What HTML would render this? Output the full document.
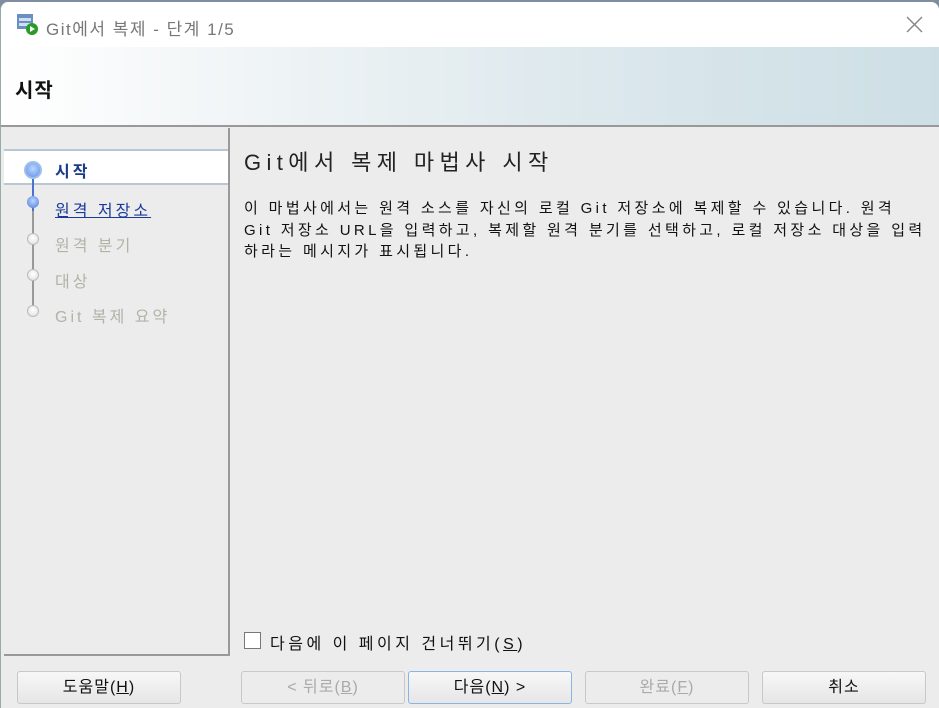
<!DOCTYPE html>
<html><head><meta charset="utf-8"><style>
*{margin:0;padding:0;box-sizing:border-box}
body{width:939px;height:708px;overflow:hidden;background:#7f8fa0;font-family:"Liberation Sans","Noto Sans CJK KR",sans-serif;position:relative}
.win{position:absolute;left:0;top:2px;width:939px;height:706px;background:#ececec;border-radius:8px 8px 0 0;overflow:hidden;border-left:1px solid #9aa}
.title{position:absolute;left:0;top:0;width:100%;height:45px;background:#fff}
.title span{position:absolute;left:45px;top:13px;font-size:17px;color:#777;letter-spacing:1.5px}
.hdr{position:absolute;left:0;top:45px;width:100%;height:80px;background:linear-gradient(90deg,#fff 0%,#eef3f5 30%,#d9e6eb 70%,#cddfe5 100%);border-bottom:2px solid #999}
.hdr span{position:absolute;left:14px;top:27px;font-size:20px;font-weight:bold;color:#111;letter-spacing:1px}
.left{position:absolute;left:3px;top:126px;width:226px;height:528px;border-right:2px solid #999;border-bottom:2px solid #999}
.sel{position:absolute;left:0;top:21px;width:224px;height:36px;background:#fff;border-top:2px solid #b8c6d6;border-bottom:2px solid #b8c6d6}
.it{position:absolute;left:51px;font-size:16px;letter-spacing:3px}
.dot{position:absolute;width:12px;height:12px;border-radius:50%}
.btn{position:absolute;top:669px;height:33px;width:164px;border:1px solid #c8c8c8;border-radius:3px;background:linear-gradient(#f7f7f7,#e6e6e6);font-size:16px;text-align:center;line-height:31px;color:#111;letter-spacing:1px}
.dis{color:#aaa;background:#ececec}
</style></head><body>
<div class="win">
<div class="title">
<svg style="position:absolute;left:16px;top:12px" width="22" height="22"><rect x="0" y="0" width="16" height="15" fill="#6a8fc0"/><rect x="2" y="4" width="12" height="3" fill="#cfe0f4"/><rect x="2" y="9" width="12" height="3" fill="#cfe0f4"/><circle cx="15" cy="15" r="6" fill="#2a9a2a"/><path d="M13 12 L18 15 L13 18Z" fill="#fff"/></svg>
<span>Git에서 복제 - 단계 1/5</span>
<svg style="position:absolute;left:905px;top:14px" width="17" height="17"><path d="M1 1L16 16M16 1L1 16" stroke="#888" stroke-width="1.5"/></svg>
</div>
<div class="hdr"><span>시작</span></div>
<div class="left">
<div class="sel"></div>
<div style="position:absolute;left:28px;top:38px;width:2px;height:45px;background:#4a72d0"></div>
<div style="position:absolute;left:28px;top:83px;width:2px;height:100px;background:#999"></div>
<div class="dot" style="left:20px;top:33px;width:18px;height:18px;left:20px;background:radial-gradient(circle at 50% 40%,#bcd6ff,#5f8ee6);border:2px solid #9ec0ee"></div>
<div class="dot" style="left:23px;top:68px;background:radial-gradient(circle at 50% 40%,#bcd6ff,#4a7ad8)"></div>
<div class="dot" style="left:23px;top:105px;background:radial-gradient(circle at 50% 40%,#fff,#ddd);border:1px solid #bbb"></div>
<div class="dot" style="left:23px;top:141px;background:radial-gradient(circle at 50% 40%,#fff,#ddd);border:1px solid #bbb"></div>
<div class="dot" style="left:23px;top:177px;background:radial-gradient(circle at 50% 40%,#fff,#ddd);border:1px solid #bbb"></div>
<div class="it" style="top:30px;font-weight:bold;color:#1a3a8a">시작</div>
<div class="it" style="top:69px;color:#1a3a9a;text-decoration:underline">원격 저장소</div>
<div class="it" style="top:104px;color:#b0b4a8">원격 분기</div>
<div class="it" style="top:140px;color:#b0b4a8">대상</div>
<div class="it" style="top:175px;color:#b0b4a8">Git 복제 요약</div>
</div>
<div style="position:absolute;left:243px;top:143px;font-size:22px;color:#222;letter-spacing:5.4px">Git에서 복제 마법사 시작</div>
<div style="position:absolute;left:243px;top:196px;width:690px;font-size:15px;line-height:21.5px;color:#111;letter-spacing:3.35px;white-space:nowrap">이 마법사에서는 원격 소스를 자신의 로컬 Git 저장소에 복제할 수 있습니다. 원격<br>Git 저장소 URL을 입력하고, 복제할 원격 분기를 선택하고, 로컬 저장소 대상을 입력<br>하라는 메시지가 표시됩니다.</div>
<div style="position:absolute;left:243px;top:630px;width:17px;height:17px;border:1px solid #777;background:#fff"></div>
<div style="position:absolute;left:269px;top:628px;font-size:16px;color:#111;letter-spacing:3.5px">다음에 이 페이지 건너뛰기(<u>S</u>)</div>
<div class="btn" style="left:16px">도움말(<u>H</u>)</div>
<div class="btn dis" style="left:240px">&lt; 뒤로(<u>B</u>)</div>
<div class="btn" style="left:407px;border-color:#8ab4e8">다음(<u>N</u>) &gt;</div>
<div class="btn dis" style="left:584px">완료(<u>F</u>)</div>
<div class="btn" style="left:761px">취소</div>
</div>
</body></html>
